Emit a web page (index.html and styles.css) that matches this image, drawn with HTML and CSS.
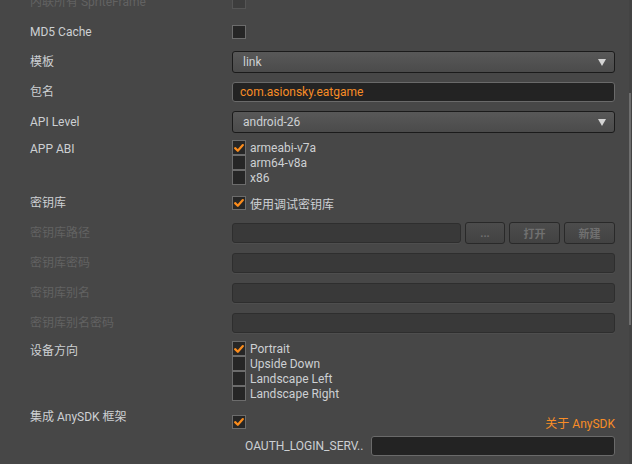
FILE: index.html
```html
<!DOCTYPE html>
<html>
<head>
<meta charset="utf-8">
<link rel="stylesheet" href="styles.css">
</head>
<body>
<div class="panel">
  <div class="row">
    <div class="label dim">内联所有 SpriteFrame</div>
    <div class="ctrl"><span class="cb dis"></span></div>
  </div>
  <div class="row">
    <div class="label">MD5 Cache</div>
    <div class="ctrl"><span class="cb"></span></div>
  </div>
  <div class="row">
    <div class="label">模板</div>
    <div class="ctrl"><div class="select"><span>link</span><i class="arrow"></i></div></div>
  </div>
  <div class="row">
    <div class="label">包名</div>
    <div class="ctrl"><div class="input orange">com.asionsky.eatgame</div></div>
  </div>
  <div class="row">
    <div class="label">API Level</div>
    <div class="ctrl"><div class="select"><span>android-26</span><i class="arrow"></i></div></div>
  </div>
  <div class="row top abi">
    <div class="label">APP ABI</div>
    <div class="list">
      <div class="item"><span class="cb on"><svg viewBox="0 0 14 14"><path d="M2.5 7.2 L5.6 10.2 L11.5 3.6"/></svg></span>armeabi-v7a</div>
      <div class="item"><span class="cb"></span>arm64-v8a</div>
      <div class="item"><span class="cb"></span>x86</div>
    </div>
  </div>
  <div class="row">
    <div class="label">密钥库</div>
    <div class="ctrl"><span class="cb on"><svg viewBox="0 0 14 14"><path d="M2.5 7.2 L5.6 10.2 L11.5 3.6"/></svg></span><span class="cbtext">使用调试密钥库</span></div>
  </div>
  <div class="row">
    <div class="label dim">密钥库路径</div>
    <div class="ctrl gap">
      <div class="input off grow"></div>
      <div class="btn w40">...</div>
      <div class="btn w51">打开</div>
      <div class="btn w51">新建</div>
    </div>
  </div>
  <div class="row">
    <div class="label dim">密钥库密码</div>
    <div class="ctrl"><div class="input off"></div></div>
  </div>
  <div class="row">
    <div class="label dim">密钥库别名</div>
    <div class="ctrl"><div class="input off"></div></div>
  </div>
  <div class="row">
    <div class="label dim">密钥库别名密码</div>
    <div class="ctrl"><div class="input off"></div></div>
  </div>
  <div class="row top orient">
    <div class="label">设备方向</div>
    <div class="list">
      <div class="item"><span class="cb on"><svg viewBox="0 0 14 14"><path d="M2.5 7.2 L5.6 10.2 L11.5 3.6"/></svg></span>Portrait</div>
      <div class="item"><span class="cb"></span>Upside Down</div>
      <div class="item"><span class="cb"></span>Landscape Left</div>
      <div class="item"><span class="cb"></span>Landscape Right</div>
    </div>
  </div>
  <div class="row top sdk">
    <div class="label">集成 AnySDK 框架</div>
    <div class="sdkcol">
      <div class="sdkline">
        <span class="cb on"><svg viewBox="0 0 14 14"><path d="M2.5 7.2 L5.6 10.2 L11.5 3.6"/></svg></span>
        <span class="about">关于 AnySDK</span>
      </div>
      <div class="oauth">
        <div class="olabel">OAUTH_LOGIN_SERV..</div>
        <div class="input grow"></div>
      </div>
    </div>
  </div>
</div>
<div class="scroll"><div class="thumb"></div></div>
</body>
</html>
```
FILE: styles.css
```css
html, body {
  margin: 0;
  padding: 0;
  background: #474747;
  overflow: hidden;
  width: 632px;
  height: 464px;
}
body {
  font-family: Roboto, "Noto Sans CJK SC", sans-serif;
  font-size: 12px;
  color: #cdd0d3;
  position: relative;
}
.panel {
  margin-top: -13px;
  display: flex;
  flex-direction: column;
}
.row {
  display: flex;
  align-items: center;
  height: 30px;
}
.row.top {
  align-items: flex-start;
  height: auto;
}
.label {
  width: 232px;
  flex: none;
  box-sizing: border-box;
  padding-left: 30px;
  line-height: 18px;
  white-space: nowrap;
}
.label.dim { color: #626262; }
.ctrl {
  width: 383px;
  display: flex;
  align-items: center;
}
.ctrl.gap { gap: 4px; }
.cb {
  width: 14px;
  height: 14px;
  box-sizing: border-box;
  border: 1px solid #6c6c6c;
  background: #262626;
  flex: none;
  display: inline-flex;
  align-items: center;
  justify-content: center;
}
.cb.dis {
  border-color: #555;
  background: #3d3d3d;
}
.cb svg {
  width: 14px;
  height: 14px;
  display: block;
}
.cb path {
  fill: none;
  stroke: #fb8c1c;
  stroke-width: 2.6;
  stroke-linecap: round;
  stroke-linejoin: round;
}
.cbtext { margin-left: 4px; }
.select {
  width: 383px;
  height: 22px;
  box-sizing: border-box;
  border: 1px solid #1b1b1b;
  border-radius: 3px;
  background: linear-gradient(#585858, #4b4b4b);
  display: flex;
  align-items: center;
  padding-left: 10px;
  padding-right: 8px;
  justify-content: space-between;
}
.arrow {
  width: 0;
  height: 0;
  border-left: 4px solid transparent;
  border-right: 4px solid transparent;
  border-top: 7px solid #d4d4d4;
}
.input {
  width: 383px;
  height: 20px;
  box-sizing: border-box;
  border: 1px solid #6a6a6a;
  border-radius: 3px;
  background: #232323;
  padding-left: 7px;
  display: flex;
  align-items: center;
}
.input.orange { color: #f88d26; }
.input.off {
  background: #393939;
  border-color: #2e2e2e;
  box-shadow: 0 1px 0 #4e4e4e;
}
.grow { flex: 1; width: auto; }
.btn {
  height: 22px;
  box-sizing: border-box;
  border: 1px solid #292929;
  border-radius: 3px;
  background: linear-gradient(#4c4c4c, #424242);
  color: #707070;
  font-weight: bold;
  font-size: 11px;
  display: flex;
  align-items: center;
  justify-content: center;
  flex: none;
}
.w40 { width: 40px; }
.w51 { width: 51px; }
.list {
  display: flex;
  flex-direction: column;
  padding-top: 3px;
}
.item {
  display: flex;
  align-items: center;
  height: 15px;
  gap: 4px;
  white-space: nowrap;
}
.item .cb { height: 15px; }
.abi .label { padding-top: 3px; }
.abi { padding-bottom: 3px; }
.orient .label { padding-top: 4px; }
.sdk { margin-top: 6px; }
.sdk .label { padding-top: 1px; }
.sdkcol {
  width: 383px;
  display: flex;
  flex-direction: column;
  padding-top: 8px;
}
.sdkline {
  display: flex;
  align-items: center;
  justify-content: space-between;
  height: 14px;
}
.about { color: #f88d26; }
.oauth {
  display: flex;
  align-items: center;
  margin-top: 7px;
  height: 20px;
}
.olabel {
  width: 139px;
  box-sizing: border-box;
  padding-left: 13px;
  white-space: nowrap;
  flex: none;
}
.scroll {
  position: absolute;
  right: 0;
  top: 0;
  width: 3px;
  height: 464px;
  background: #434343;
}
.thumb {
  position: absolute;
  left: 0;
  top: 93px;
  width: 2px;
  height: 232px;
  background: #6e6e6e;
}
```
